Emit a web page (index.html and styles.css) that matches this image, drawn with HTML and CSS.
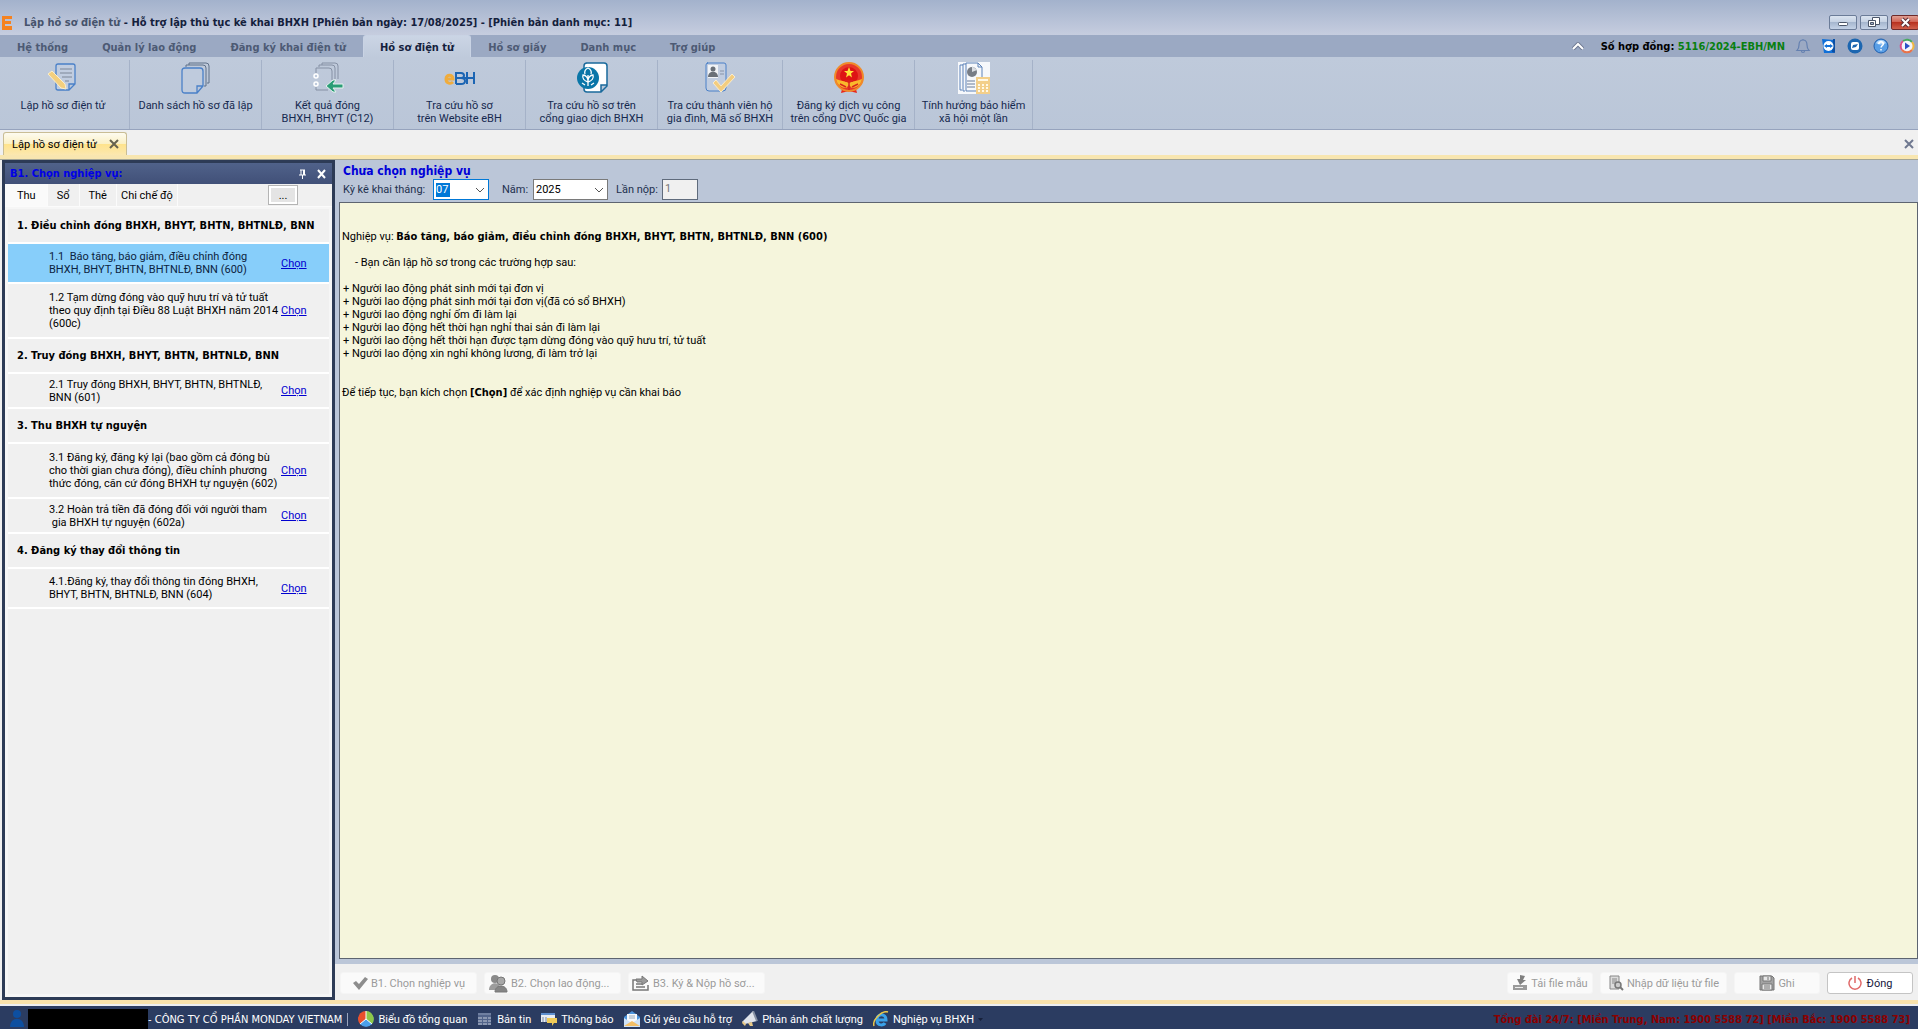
FILE: index.html
```html
<!DOCTYPE html>
<html lang="vi">
<head>
<meta charset="utf-8">
<title>Lập hồ sơ điện tử - Hỗ trợ lập thủ tục kê khai BHXH</title>
<link rel="stylesheet" href="styles.css">
</head>
<body>
<header class="titlebar">
  <svg class="app-logo" width="12" height="14" viewBox="0 0 12 14"><path d="M1 0h10v3H4v2h6v3H4v2h7v4H1z" fill="#f58220"/></svg>
  <h1 class="title"><span class="title-doc">Lập hồ sơ điện tử</span> - Hỗ trợ lập thủ tục kê khai BHXH [Phiên bản ngày: 17/08/2025] - [Phiên bản danh mục: 11]</h1>
  <div class="win-buttons">
    <button class="win" aria-label="Thu nhỏ"><svg width="26" height="13" viewBox="0 0 26 13"><rect x="8.500" y="6.500" width="9" height="3" rx="1" fill="#fff" stroke="#4a5568"/></svg></button>
    <button class="win" aria-label="Khôi phục"><svg width="26" height="13" viewBox="0 0 26 13"><path d="M11.500 1.500h7v7h-7z" fill="#fff" stroke="#4a5568"/><path d="M7.500 4.500h7v6h-7z" fill="#fff" stroke="#4a5568"/><path d="M9.500 6.500h3v2h-3z" fill="#9fb0c8" stroke="#4a5568"/></svg></button>
    <button class="win win-close" aria-label="Đóng cửa sổ"><svg width="26" height="13" viewBox="0 0 26 13"><path d="M10 3l7 7M17 3l-7 7" stroke="#5a3038" stroke-width="4"/><path d="M10 3l7 7M17 3l-7 7" stroke="#fff" stroke-width="2"/></svg></button>
  </div>
</header>

<nav class="menubar">
  <button class="menu">Hệ thống</button>
  <button class="menu">Quản lý lao động</button>
  <button class="menu">Đăng ký khai điện tử</button>
  <button class="menu menu-active">Hồ sơ điện tử</button>
  <button class="menu">Hồ sơ giấy</button>
  <button class="menu">Danh mục</button>
  <button class="menu">Trợ giúp</button>
  <div class="menu-right">
    <svg width="12" height="8" viewBox="0 0 12 8"><path d="M1 7l5-5 5 5" fill="none" stroke="#6d7890" stroke-width="4"/><path d="M1 7l5-5 5 5" fill="none" stroke="#fff" stroke-width="2"/></svg>
    <p class="contract">Số hợp đồng: <span class="contract-no">5116/2024-EBH/MN</span></p>
    <div class="tray">
      <svg width="16" height="16" viewBox="0 0 16 16"><path d="M2 12.500c2-2 2-3 2-5.500 0-3 1.500-5 4-5s4 2 4 5c0 2.500 0 3.500 2 5.500zM6.500 13c0 2 3 2 3 0M8 2V1" fill="none" stroke="#6480b0" stroke-width="1.200"/></svg>
      <svg width="16" height="16" viewBox="0 0 16 16"><path d="M1 1l12 1v13H3z" fill="#1170d8"/><path d="M12 1h2v14l-3-1z" fill="#0a4fa5"/><circle cx="7.500" cy="8" r="5" fill="#fff"/><path d="M3 8l3-2v1h3V6l3 2-3 2V9H6v1z" fill="#1170d8"/></svg>
      <svg width="16" height="16" viewBox="0 0 16 16"><circle cx="8" cy="8" r="7.500" fill="#1c66b0"/><rect x="4" y="4" width="8" height="8" rx="2" fill="#fff"/><path d="M5 10l1-3 5-1-2 3z" fill="#1c66b0"/></svg>
      <svg width="16" height="16" viewBox="0 0 16 16"><circle cx="8" cy="8" r="7" fill="#5a9fe6" stroke="#1f5fae"/><path d="M3 5c2-4 8-4 10 0-3 2-7 2-10 0z" fill="#b4d8fa"/><path d="M5.800 6c0-3 4.500-3 4.500 0 0 1.500-2.200 1.500-2.200 3.500M8 11v1.500" fill="none" stroke="#fff" stroke-width="1.500"/></svg>
      <svg width="16" height="16" viewBox="0 0 16 16"><circle cx="8" cy="8" r="7" fill="#f4f4fa"/><path d="M3 12A6.500 6.500 0 0 1 4 3" fill="none" stroke="#d94f8c" stroke-width="2"/><path d="M4 3a6.500 6.500 0 0 1 9 1" fill="none" stroke="#48a860" stroke-width="2"/><path d="M13 4a6.500 6.500 0 0 1 0 8" fill="none" stroke="#f0b840" stroke-width="2"/><path d="M13 12a6.500 6.500 0 0 1-10 0" fill="none" stroke="#e8734a" stroke-width="2"/><path d="M6 4.500l5 3.500-5 3.500z" fill="#2a50c8"/></svg>
    </div>
  </div>
</nav>

<section class="ribbon" aria-label="Hồ sơ điện tử">
  <button class="tool">
    <svg width="32" height="32" viewBox="0 0 32 32"><path d="M11 2h15q2 0 2 2v18l-6 6H11q-2 0-2-2V4q0-2 2-2M28 22h-6v6" fill="#c1cde0" stroke="#4a80c8" stroke-width="1.300"/><path d="M13 7h12M13 11h12M15 15h10M18 19h4" stroke="#7c8798"/><path d="M1 12l4-3 13 13 1 5-5-1z" fill="#f3cf7e" stroke="#fbeecb"/></svg>
    <span>Lập hồ sơ điện tử</span></button>
  <button class="tool">
    <svg width="32" height="32" viewBox="0 0 32 32"><path d="M9 3V1h17q3 0 3 3v17h-2M6 5V3h17q3 0 3 3v18h-2" fill="none" stroke="#5f7088"/><path d="M5 6h15q3 0 3 3v15l-6 7H5q-3 0-3-3V9q0-3 3-3M23 24h-6v7" fill="#bfcbdd" stroke="#4a80c8" stroke-width="1.300"/></svg>
    <span>Danh sách hồ sơ đã lập</span></button>
  <button class="tool">
    <svg width="32" height="32" viewBox="0 0 32 32"><path d="M10 3V1h13q3 0 3 3v13M7 5V3h13q3 0 3 3v11" fill="none" stroke="#8590a4"/><path d="M4 11V6h13q3 0 3 3v9M4 25v3h12" fill="none" stroke="#8590a4"/><circle cx="4" cy="14" r="2" fill="#bfcbdd" stroke="#fff" stroke-width="1.500"/><circle cx="4" cy="22" r="2" fill="#bfcbdd" stroke="#fff" stroke-width="1.500"/><path d="M31 22H21l3-4h-3l-7 6 7 6h3l-3-4h10z" fill="#2a9d76" stroke="#e4f3ee"/></svg>
    <span>Kết quả đóng<br>BHXH, BHYT (C12)</span></button>
  <button class="tool">
    <svg width="32" height="32" viewBox="0 0 32 32"><path d="M1 17h8c0-5-7-5-7 0s5 5 7 3" fill="none" stroke="#f0ac3c" stroke-width="3"/><path d="M12 10v12M12 11h5q3 0 3 2.500t-3 2.500h-4M13 16h4q4 0 4 3t-4 3h-5M23 10v12M30 10v12M20 16h10" fill="none" stroke="#1c65b3" stroke-width="2"/></svg>
    <span>Tra cứu hồ sơ<br>trên Website eBH</span></button>
  <button class="tool">
    <svg width="32" height="32" viewBox="0 0 32 32"><path d="M10 1h18q3 0 3 3v20l-6 6H11q-3 0-3-3V4q0-3 3-3M31 23h-6v7" fill="#fff" stroke="#1a6a9c" stroke-width="1.500"/><circle cx="12" cy="16" r="11" fill="#0a76a8"/><path d="M12 24V13M12 20c-4-1-6-4-5-7 3 0 5 3 5 6 0-3 2-6 5-6 1 3-1 6-5 7M9 12c-1-3 1-5 3-6 2 1 4 3 3 6M6 21l3 2M18 21l-3 2" fill="none" stroke="#fff" stroke-width="1.300"/></svg>
    <span>Tra cứu hồ sơ trên<br>cổng giao dịch BHXH</span></button>
  <button class="tool tool-snug">
    <svg width="32" height="32" viewBox="0 0 32 32"><path d="M3 1h17q2 0 2 2v23q0 3-3 3H5q-3 0-3-3V3q0-2 2-2z" fill="#c1cde0" stroke="#4a80c8"/><rect x="4" y="3" width="10" height="13" fill="#f1f3f6"/><circle cx="9" cy="7" r="2.500" fill="#6a7078"/><path d="M4 15c0-7 10-7 10 0z" fill="#6a7078"/><path d="M16 9h4M16 12h4" stroke="#8794a8"/><path d="M9 21l3-3 5 6 11-12 3 3-14 15z" fill="#f3cd80" stroke="#fbeccb"/></svg>
    <span>Tra cứu thành viên hộ<br>gia đình, Mã số BHXH</span></button>
  <button class="tool">
    <svg width="32" height="32" viewBox="0 0 32 32"><path d="M9 27l-1 4 8-2 8 2-1-4z" fill="#e8281c"/><circle cx="16" cy="15" r="14" fill="#e8382a" stroke="#f08a2a" stroke-width="2"/><circle cx="16" cy="14" r="9" fill="#de1414"/><path d="M16 5l1.500 4H21l-3 2.500 1 4-3-2.300-3 2.300 1-4L11 9h3.500z" fill="#ffe23a"/><path d="M3 17c5 2 9 2 13 4 4-2 8-2 13-4-1 6-6 9-10 9l-3-3-3 3c-4 0-9-3-10-9z" fill="#f9b92c"/><path d="M7 22l6 3M25 22l-6 3M12 19h8M16 19v9" stroke="#d8271c" stroke-width="1.500"/></svg>
    <span>Đăng ký dịch vụ công<br>trên cổng DVC Quốc gia</span></button>
  <button class="tool tool-slim">
    <svg width="32" height="32" viewBox="0 0 32 32"><path d="M0 0h32v32H0z" fill="#f6f8fb"/><path d="M5 3H2v25h2M8 2H5v27h2M8 1h12l4 4v24H8zM20 1v4h4" fill="none" stroke="#5c82b8"/><circle cx="14" cy="10" r="5" fill="#777d86"/><path d="M14 10V4l5 4z" fill="#d9dde3"/><path d="M9 19h8M9 22h8M9 25h8" stroke="#6a7d9a"/><path d="M18 15h14v17H18z" fill="#f3cf8a"/><path d="M20 18h10" stroke="#fff8e6" stroke-width="2"/><path d="M20 23h10M20 26h10M20 29h10" stroke="#fff8e6" stroke-width="2" stroke-dasharray="2 2"/></svg>
    <span>Tính hưởng bảo hiểm<br>xã hội một lần</span></button>
</section>

<div class="doc-tabs">
  <div class="doc-tab"><span>Lập hồ sơ điện tử</span>
    <button class="icon-btn" aria-label="Đóng tab"><svg width="10" height="10" viewBox="0 0 10 10"><path d="M1 1l8 8M9 1L1 9" stroke="#66624f" stroke-width="2"/></svg></button></div>
  <button class="icon-btn" aria-label="Đóng tất cả"><svg width="10" height="10" viewBox="0 0 10 10"><path d="M1 1l8 8M9 1L1 9" stroke="#6f7890" stroke-width="2"/></svg></button>
</div>

<main class="workspace">
  <aside class="dock">
    <div class="dock-head">
      <h2 class="dock-title">B1. Chọn nghiệp vụ:</h2>
      <button class="icon-btn" aria-label="Ghim"><svg width="9" height="10" viewBox="0 0 9 10"><path d="M2 1h5M3 1v5M5.500 1v5M6.500 1v5M1 6h7M4.500 6v4" stroke="#fff" fill="none"/></svg></button>
      <button class="icon-btn" aria-label="Đóng bảng"><svg width="9" height="10" viewBox="0 0 9 10"><path d="M1 1l7 8M8 1L1 9" stroke="#fff" stroke-width="2"/></svg></button>
    </div>
    <div class="dock-tabs">
      <button class="dock-tab dock-tab-active">Thu</button>
      <button class="dock-tab">Sổ</button>
      <button class="dock-tab">Thẻ</button>
      <button class="dock-tab dock-tab-last">Chi chế độ</button>
      <button class="more">...</button>
    </div>
    <ul class="tasks">
      <li class="group">1. Điều chỉnh đóng BHXH, BHYT, BHTN, BHTNLĐ, BNN</li>
      <li class="task task-mid task-selected"><span>1.1&nbsp; Báo tăng, báo giảm, điều chỉnh đóng<br>BHXH, BHYT, BHTN, BHTNLĐ, BNN (600)</span><a href="#600">Chọn</a></li>
      <li class="task task-tall"><span>1.2 Tạm dừng đóng vào quỹ hưu trí và tử tuất<br>theo quy định tại Điều 88 Luật BHXH năm 2014<br>(600c)</span><a href="#600c">Chọn</a></li>
      <li class="group">2. Truy đóng BHXH, BHYT, BHTN, BHTNLĐ, BNN</li>
      <li class="task"><span>2.1 Truy đóng BHXH, BHYT, BHTN, BHTNLĐ,<br>BNN (601)</span><a href="#601">Chọn</a></li>
      <li class="group">3. Thu BHXH tự nguyện</li>
      <li class="task task-tall"><span>3.1 Đăng ký, đăng ký lại (bao gồm cả đóng bù<br>cho thời gian chưa đóng), điều chỉnh phương<br>thức đóng, căn cứ đóng BHXH tự nguyện (602)</span><a href="#602">Chọn</a></li>
      <li class="task"><span>3.2 Hoàn trả tiền đã đóng đối với người tham<br>&nbsp;gia BHXH tự nguyện (602a)</span><a href="#602a">Chọn</a></li>
      <li class="group">4. Đăng ký thay đổi thông tin</li>
      <li class="task task-mid"><span>4.1.Đăng ký, thay đổi thông tin đóng BHXH,<br>BHYT, BHTN, BHTNLĐ, BNN (604)</span><a href="#604">Chọn</a></li>
    </ul>
  </aside>

  <section class="content">
    <div class="form-head">
      <h2 class="form-title">Chưa chọn nghiệp vụ</h2>
      <div class="fields">
        <label class="lbl lbl-month" for="thang">Kỳ kê khai tháng:</label>
        <span class="combo combo-month"><select id="thang" class="sel sel-focus"><option>07</option></select><svg class="chev" width="10" height="6" viewBox="0 0 10 6"><path d="M1 1l4 4 4-4" fill="none" stroke="#555"/></svg></span>
        <label class="lbl lbl-year" for="nam">Năm:</label>
        <span class="combo combo-year"><select id="nam" class="sel"><option>2025</option></select><svg class="chev" width="10" height="6" viewBox="0 0 10 6"><path d="M1 1l4 4 4-4" fill="none" stroke="#555"/></svg></span>
        <label class="lbl lbl-times" for="lan">Lần nộp:</label>
        <input id="lan" class="times" type="text" value="1" disabled>
      </div>
    </div>
    <article class="guide">
      <p class="guide-task">Nghiệp vụ: <b>Báo tăng, báo giảm, điều chỉnh đóng BHXH, BHYT, BHTN, BHTNLĐ, BNN (600)</b></p>
      <p class="guide-intro">- Bạn cần lập hồ sơ trong các trường hợp sau:</p>
      <ul class="cases">
        <li>+ Người lao động phát sinh mới tại đơn vị</li>
        <li>+ Người lao động phát sinh mới tại đơn vị(đã có sổ BHXH)</li>
        <li>+ Người lao động nghỉ ốm đi làm lại</li>
        <li>+ Người lao động hết thời hạn nghỉ thai sản đi làm lại</li>
        <li>+ Người lao động hết thời hạn được tạm dừng đóng vào quỹ hưu trí, tử tuất</li>
        <li>+ Người lao động xin nghỉ không lương, đi làm trở lại</li>
      </ul>
      <p>Để tiếp tục, bạn kích chọn <b>[Chọn]</b> để xác định nghiệp vụ cần khai báo</p>
    </article>
    <div class="actions">
      <button class="act act-step" disabled><svg width="16" height="16" viewBox="0 0 16 16"><path d="M1 8l3-2 3 3 6-7 3 2-9 11z" fill="#8d8d8d"/></svg>B1. Chọn nghiệp vụ</button>
      <button class="act act-step act-people" disabled><svg width="20" height="20" viewBox="0 0 20 20"><circle cx="7" cy="6" r="4" fill="#8a8a8a"/><path d="M1 17c0-9 12-9 12 0z" fill="#9c9c9c"/><circle cx="13" cy="8" r="4" fill="#a8a8a8" stroke="#777"/><path d="M7 19c0-8 12-8 12 0z" fill="#858585" stroke="#777"/></svg>B2. Chọn lao động...</button>
      <button class="act act-step act-people" disabled><svg width="18" height="16" viewBox="0 0 18 16"><path d="M4 5H1v10h15v-5M4 12h9M4 9h6" fill="none" stroke="#777" stroke-width="1.500"/><path d="M4 4h6V1l6 5-6 4V7H5z" fill="#9a9a9a" stroke="#777"/></svg>B3. Ký &amp; Nộp hồ sơ...</button>
      <span class="spacer"></span>
      <button class="act act-small" disabled><svg width="16" height="16" viewBox="0 0 16 16"><path d="M8 0l5 1-2 4h3l-6 5-3-6h3z" fill="#808080"/><path d="M1 10h14v5H1z" fill="#9a9a9a"/><path d="M3 12.500h8" stroke="#eee"/></svg>Tải file mẫu</button>
      <button class="act act-import" disabled><svg width="16" height="16" viewBox="0 0 16 16"><path d="M2 1h9v13H2z" fill="#ddd" stroke="#888"/><path d="M4 4h5M4 6h5M4 8h5" stroke="#888"/><circle cx="10" cy="10" r="3" fill="#ccc" stroke="#777" stroke-width="1.500"/><path d="M12 12l3 3" stroke="#777" stroke-width="2"/></svg>Nhập dữ liệu từ file</button>
      <button class="act act-small" disabled><svg width="16" height="16" viewBox="0 0 16 16"><path d="M1 1h12l2 2v12H1z" fill="#a2a2a2" stroke="#777"/><path d="M4 1h8v5H4zM3 9h10v6H3z" fill="#e6e6e6" stroke="#777"/><path d="M9 2v3M5 11h6M5 13h6" stroke="#777"/></svg>Ghi</button>
      <button class="act act-small act-close"><svg width="14" height="14" viewBox="0 0 14 14"><path d="M4 2a6 6 0 1 0 6 0M7 0v7" fill="none" stroke="#e06a6a" stroke-width="1.500"/></svg>Đóng</button>
    </div>
  </section>
</main>

<footer class="status">
  <svg width="16" height="18" viewBox="0 0 16 18"><circle cx="8" cy="4" r="4" fill="#0d4fa0"/><path d="M1 17c0-11 14-11 14 0z" fill="#0d4fa0"/></svg>
  <span class="redacted"></span>
  <span class="company">- CÔNG TY CỔ PHẦN MONDAY VIETNAM</span>
  <a class="st" href="#bieudo"><svg width="16" height="16" viewBox="0 0 16 16"><circle cx="8" cy="8" r="7.500" fill="#3f9be8"/><path d="M8 8V0a8 8 0 0 0-8 8 8 8 0 0 0 2 5z" fill="#e9502c"/><path d="M8 8V0a8 8 0 0 1 6 13z" fill="#8cc84a"/><path d="M8 8l-6 5a8 8 0 0 0 12 0z" fill="#4aa0ec"/><path d="M8 0v8l6 5M8 8l-6 5" stroke="#fff" fill="none"/></svg>Biểu đồ tổng quan</a>
  <a class="st" href="#bantin"><svg width="16" height="16" viewBox="0 0 16 16"><path d="M1 2h13v12H1z" fill="#52648a"/><path d="M1 3h13" stroke="#6f7fa0" stroke-width="2"/><path d="M1 7h13M1 10h13M1 13h13" stroke="#c4cbd8" stroke-dasharray="4 1"/></svg>Bản tin</a>
  <a class="st" href="#thongbao"><svg width="16" height="16" viewBox="0 0 16 16"><path d="M0 2h14v9H0z" fill="#e8edf4"/><path d="M0 3h14" stroke="#5d8fd0" stroke-width="2"/><path d="M2 6v5M5 6v5" stroke="#7a8ba5"/><path d="M6 7h10v5h-3l-2 3v-3H6z" fill="#f0cb58"/></svg>Thông báo</a>
  <a class="st" href="#hotro"><svg width="16" height="16" viewBox="0 0 16 16"><path d="M0 6l8-6 8 6v9H0z" fill="#4c94dc"/><path d="M3 3h10v8H3z" fill="#f7f9fc"/><path d="M5 5h6M5 7h6" stroke="#9ab"/><path d="M0 7l8 5 8-5v9H0z" fill="#cfe2f7"/><path d="M0 15l8-5 8 5z" fill="#f3bf68"/></svg>Gửi yêu cầu hỗ trợ</a>
  <a class="st" href="#phananh"><svg width="16" height="16" viewBox="0 0 16 16"><path d="M0 11L11 0l4 10-12 3z" fill="#dfe3ea"/><path d="M11 0l4 10" stroke="#8791a3" stroke-width="2"/><path d="M1 10l3 3-1 2-3-3zM6 12l4-1 1 4H8z" fill="#e8c987"/></svg>Phản ánh chất lượng</a>
  <a class="st" href="#nghiepvu"><svg width="16" height="16" viewBox="0 0 16 16"><path d="M4 9h9c0-7-9-7-9 0s7 5 8 3" fill="none" stroke="#3aa2ea" stroke-width="3"/><path d="M1 15C-1 9 9-1 15 1" fill="none" stroke="#e9c54a" stroke-width="1.500"/></svg>Nghiệp vụ BHXH</a>
  <svg class="drop" width="5" height="3" viewBox="0 0 5 3"><path d="M0 0h5L2.500 3z" fill="#16203a"/></svg>
  <span class="spacer"></span>
  <b class="hotline">Tổng đài 24/7: [Miền Trung, Nam: 1900 5588 72] [Miền Bắc: 1900 5588 73]</b>
</footer>
</body>
</html>
```
FILE: styles.css
```css
* { box-sizing: border-box; }
html, body { height: 100%; }
body {
  margin: 0;
  display: flex;
  flex-direction: column;
  min-height: 100vh;
  overflow: hidden;
  background: #f0f0f0;
  color: #000;
  font-family: Roboto, "Noto Sans", sans-serif;
  font-size: 11px;
  line-height: 13px;
}
button, input, select { font: inherit; color: inherit; margin: 0; padding: 0; }
button { border: 0; background: none; white-space: nowrap; }
h1, h2, p, ul { margin: 0; padding: 0; font-size: inherit; }
ul { list-style: none; }
b, .title, .menu, .contract, .dock-title, .form-title, .group {
  font-family: "DejaVu Sans Condensed", "DejaVu Sans", "Noto Sans", sans-serif;
  font-weight: bold;
}
svg { flex: none; display: block; }
.spacer { flex: 1; }
.icon-btn { display: flex; }

.titlebar {
  display: flex;
  align-items: center;
  height: 35px;
  padding-top: 10px;
  background: linear-gradient(#a3b2cc, #c6cddf);
}
.app-logo { margin-left: 1px; }
.title { flex: 1; margin-left: 11px; color: #14203c; white-space: nowrap; }
.title-doc { color: #46536c; }
.win-buttons { display: flex; gap: 3px; overflow: hidden; margin-right: -1px; }
.win {
  height: 15px;
  border: 1px solid #6b7c98;
  border-radius: 2px;
  background: linear-gradient(#dbe4f0, #c3d0e2 50%, #a6b7cf 50%, #c4d2e6);
}
.win-close { border-color: #6e2a2a; background: linear-gradient(#e0a094, #cf5c4c 50%, #b83220 50%, #d0604c); }

.menubar { display: flex; height: 22px; background: #9ba9c3; }
.menu { padding: 3px 17px 0; color: #4d5a74; }
.menu-active {
  border: 1px solid #c9d3e4;
  border-bottom: 0;
  border-radius: 3px 3px 0 0;
  padding: 2px 16px 0;
  background: linear-gradient(#cbd5e5, #bfcadb);
  color: #14203c;
}
.menu-right { display: flex; align-items: center; margin-left: auto; padding-right: 3px; }
.contract { margin: 0 10px 0 17px; white-space: nowrap; }
.contract-no { color: #087f10; }
.tray { display: flex; gap: 10px; }

.ribbon {
  display: flex;
  height: 73px;
  padding-top: 3px;
  border-bottom: 1px solid #96a3bd;
  background: linear-gradient(#bfcadb, #bac6d8);
}
.tool {
  display: flex;
  flex-direction: column;
  align-items: center;
  gap: 5px;
  width: 132px;
  padding-top: 2px;
  border-right: 1px solid #a5b2c8;
  color: #16294f;
}
.tool-snug { width: 125px; }
.tool-slim { width: 118px; }
.tool:first-child { width: 130px; padding-right: 3px; }

.doc-tabs {
  display: flex;
  align-items: center;
  justify-content: space-between;
  height: 29px;
  padding: 2px 4px 0 3px;
  border-bottom: 4px solid #f8e6b0;
  background: #f0f0f0;
}
.doc-tab {
  display: flex;
  align-items: center;
  justify-content: space-between;
  align-self: stretch;
  width: 124px;
  padding: 0 7px 0 8px;
  border: 1px solid #c9bd95;
  border-bottom: 0;
  border-radius: 3px 3px 0 0;
  background: linear-gradient(#fdfbf0, #fbf0c4 50%, #ffe38c 51%, #fbe8b0);
}

.workspace {
  flex: 1;
  display: flex;
  min-height: 0;
  padding-left: 2px;
  border-top: 1px solid #a3a596;
  border-bottom: 4px solid #f8e2ac;
}
.dock {
  display: flex;
  flex-direction: column;
  flex: none;
  width: 333px;
  border: 3px solid #2d3b56;
  background: #f0f0f0;
}
.dock-head {
  display: flex;
  align-items: center;
  gap: 10px;
  height: 21px;
  padding: 0 6px 0 5px;
  background: linear-gradient(#50628a, #415078);
}
.dock-title { flex: 1; color: #0000e6; }
.dock-tabs { display: flex; height: 23px; border-bottom: 1px solid #fbfbfb; }
.dock-tab { padding: 1px 9px 0; border-right: 1px solid #fbfbfb; }
.dock-tab-active { padding: 0 11px 0 12px; background: #fafafa; }
.dock-tab-last { padding: 1px 4px 0; }
.more {
  width: 30px;
  height: 20px;
  margin: 1px 34px 0 auto;
  border: 1px solid #b4b4b4;
  box-shadow: inset 0 0 0 2px #fff;
  background: #e4e4e4;
}
.tasks {
  flex: 1;
  border: 3px solid #f6f6f6;
  border-top: 2px solid #f6f6f6;
}
.group, .task {
  display: flex;
  align-items: center;
  height: 35px;
  border-bottom: 2px solid #fff;
}
.group { padding-left: 9px; white-space: nowrap; }
.task span { padding-left: 41px; flex: 1; white-space: nowrap; }
.task a { flex: none; width: 48px; color: #0000d0; }
.task-mid { height: 40px; }
.task-tall { height: 55px; }
.task-selected { background: #87cefa; color: #0c2340; }

.content { flex: 1; display: flex; flex-direction: column; min-width: 0; background: #bbc6d8; }
.form-head { height: 42px; padding: 4px 0 0 8px; }
.form-title { color: #0000d8; font-size: 12px; line-height: 15px; }
.fields { display: flex; align-items: center; color: #22304e; }
.lbl { white-space: nowrap; }
.lbl-month { width: 90px; }
.combo { position: relative; display: block; color: #000; }
.combo-month { width: 56px; }
.combo-year { width: 75px; }
.lbl-year { width: 44px; padding-left: 13px; }
.lbl-times { width: 54px; padding-left: 8px; }
.sel {
  appearance: none;
  display: block;
  width: 100%;
  height: 21px;
  padding-left: 2px;
  border: 1px solid #7a7a7a;
  border-radius: 0;
  background: #fff;
}
.sel-focus {
  border-color: #0078d7;
  background: linear-gradient(#0078d7, #0078d7) 2px 3px / 14px 14px no-repeat #fff;
  color: #fff;
}
.chev { position: absolute; right: 4px; top: 8px; pointer-events: none; }
.times {
  width: 36px;
  height: 21px;
  padding: 0 0 3px 2px;
  border: 1px solid #5f6b7c;
  background: #f0f0f0;
  color: #777;
}
.guide {
  flex: 1;
  margin-left: 4px;
  padding: 27px 2px 0;
  border: 1px solid #5d6470;
  background: #f5f5dc;
}
.guide-task { margin-bottom: 13px; }
.guide-intro { margin-bottom: 13px; padding-left: 13px; }
.cases { margin-bottom: 26px; padding-left: 1px; }
.actions {
  display: flex;
  gap: 7px;
  height: 41px;
  padding: 8px 5px 7px 5px;
  border-top: 5px solid #bbc6d8;
  background: #f0f0f0;
}
.act {
  display: flex;
  align-items: center;
  justify-content: center;
  gap: 3px;
  height: 22px;
  border: 1px solid #f5f5f5;
  border-radius: 3px;
  background: #fafafa;
}
.act:disabled { color: #9b9b9b; }
.act-step { width: 137px; }
.act-people { justify-content: flex-start; padding-left: 3px; }
.act-small { width: 86px; }
.act-import { width: 127px; }
.act-close { gap: 5px; border-color: #c4c4c4; background: #fff; color: #16163c; }

.status {
  display: flex;
  align-items: center;
  height: 25px;
  padding: 3px 8px 0 9px;
  border-top: 2px solid #eceef2;
  background: #2b3c61;
  color: #fff;
  white-space: nowrap;
}
.redacted { align-self: stretch; width: 120px; margin-left: 3px; background: #000; }
.company {
  padding-right: 5px;
  border-right: 1px solid #9aa6be;
  font-family: "DejaVu Sans Condensed", "DejaVu Sans", "Noto Sans", sans-serif;
}
.st { display: flex; align-items: center; gap: 4px; margin-left: 10px; color: #fff; text-decoration: none; }
.drop { margin-left: 4px; }
.hotline { color: #8b0000; }
```
